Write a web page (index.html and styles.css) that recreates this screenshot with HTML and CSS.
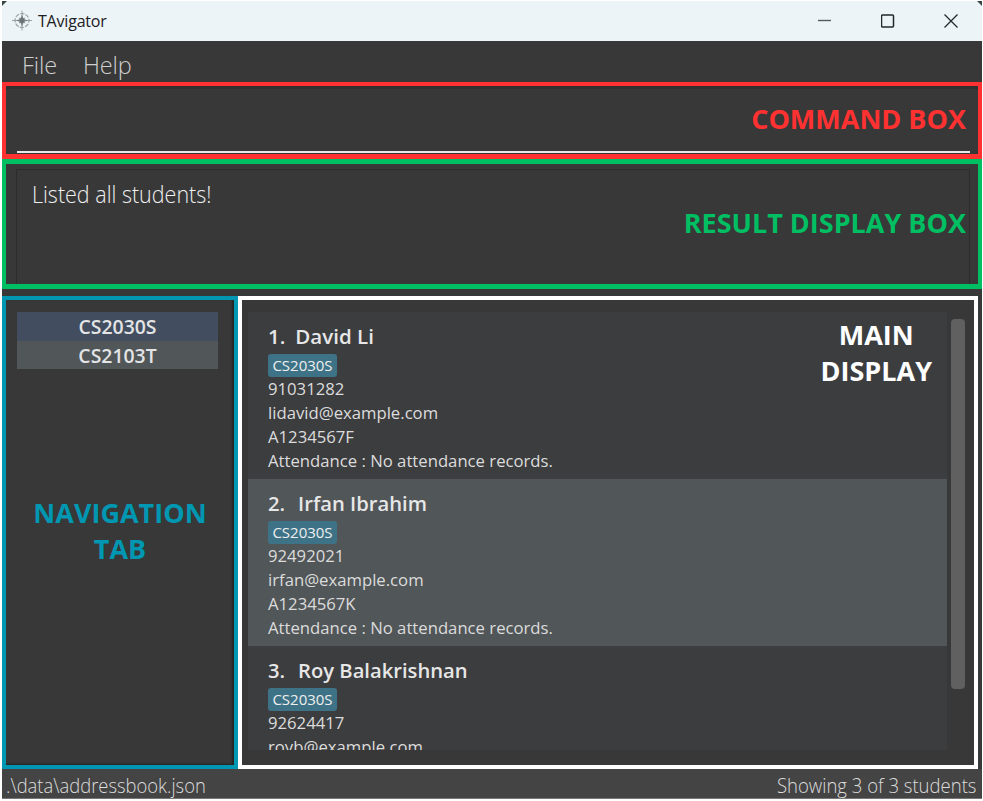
FILE: index.html
```html
<!DOCTYPE html>
<html lang="en">
<head>
<meta charset="utf-8">
<title>TAvigator</title>
<link rel="stylesheet" href="styles.css">
</head>
<body>
<div class="window">
  <header class="titlebar">
    <svg class="logo" width="20" height="22" viewBox="0 0 20 22" fill="none">
      <circle cx="10" cy="10.500" r="7" stroke="#9aa0a3" stroke-width="1.200" stroke-dasharray="4.200 1.300" stroke-dashoffset="2"/>
      <path d="M10 .500v20M0 10.500h20" stroke="#969c9f" stroke-width=".9"/>
      <path d="M10 4.500l1.500 4.500L16 10.500l-4.500 1.500L10 16.500l-1.500-4.500L4 10.500l4.500-1.500z" fill="#757b7f"/>
      <path d="M7.500 8l5 5M12.500 8l-5 5" stroke="#6a7073" stroke-width="1.200"/>
    </svg>
    <span class="app-name">TAvigator</span>
    <div class="controls">
      <svg width="14" height="14" viewBox="0 0 14 14"><path d="M0 6.500h13" stroke="#555a5d" stroke-width="1.400"/></svg>
      <svg width="14" height="14" viewBox="0 0 14 14"><rect x=".5" y="1" width="12" height="12" rx="1" fill="none" stroke="#23272a" stroke-width="1.500"/></svg>
      <svg width="14" height="14" viewBox="0 0 14 14"><path d="M.5.500l13 13M13.500.500l-13 13" stroke="#25292b" stroke-width="1.300"/></svg>
    </div>
  </header>
  <nav class="menu"><span>File</span><span>Help</span></nav>
  <section class="command"><div class="command-field"><span class="label">COMMAND BOX</span></div></section>
  <section class="result"><div class="result-field"><span class="message">Listed all students!</span><span class="label result-label">RESULT DISPLAY BOX</span></div></section>
  <main class="content">
    <aside class="nav">
      <div class="course selected">CS2030S</div>
      <div class="course">CS2103T</div>
      <div class="label nav-label">NAVIGATION<br>TAB</div>
    </aside>
    <section class="display">
      <div class="list">
        <article class="card">
          <h2 class="first"><span>1.</span><span>David Li</span></h2>
          <span class="tag">CS2030S</span>
          <p>91031282</p><p>lidavid@example.com</p><p>A1234567F</p><p>Attendance : No attendance records.</p>
        </article>
        <article class="card alt">
          <h2><span>2.</span><span>Irfan Ibrahim</span></h2>
          <span class="tag">CS2030S</span>
          <p>92492021</p><p>irfan@example.com</p><p>A1234567K</p><p>Attendance : No attendance records.</p>
        </article>
        <article class="card">
          <h2><span>3.</span><span>Roy Balakrishnan</span></h2>
          <span class="tag">CS2030S</span>
          <p>92624417</p><p>royb@example.com</p>
        </article>
      </div>
      <div class="scrollbar"></div>
      <div class="label main-label">MAIN<br>DISPLAY</div>
    </section>
  </main>
  <footer class="status"><span class="path">.\data\addressbook.json</span><span class="count">Showing 3 of 3 students</span></footer>
</div>
</body>
</html>
```
FILE: styles.css
```css
* { box-sizing: border-box; }
body { margin: 0; width: 983px; height: 801px; overflow: hidden; background: #fff; font-family: "Open Sans", sans-serif; }
.window { margin: 1px 0 0 2px; width: 980px; height: 798px; background: #383838; display: flex; flex-direction: column; border-bottom: 1px solid #777; }
.titlebar { height: 40px; background: linear-gradient(225deg, #3a4444 3px, transparent 4px), linear-gradient(135deg, #3a4444 3px, #ecf4f8 4px); display: flex; align-items: center; padding: 0 24px 0 10px; }
.app-name { margin-left: 6px; font-size: 16px; color: #1d2022; white-space: nowrap; letter-spacing: -.2px; }
.controls { margin-left: auto; display: flex; gap: 49px; }
.controls svg { display: block; }
.menu { height: 41px; padding: 4px 20px 0; font-size: 23.500px; line-height: 41px; font-weight: 300; color: #cfcfcf; display: flex; gap: 26px; letter-spacing: -.1px; }
.command { height: 77px; border: 4px solid #ff3131; border-bottom-width: 5px; padding: 2px 8px 0 11px; box-shadow: inset 0 3px 0 #303030; }
.command-field { height: 65px; border-bottom: 2px solid #e8e8e8; text-align: right; padding: 13px 4px 0 0; }
.label { font-weight: 700; font-size: 27px; line-height: 36px; color: #ff3131; white-space: nowrap; }
.command .label { display: block; }
.result { height: 130px; border: 4px solid #00bf63; border-width: 5px 4px; padding: 5px 8px 0 10px; }
.result-field { height: 115px; border: 1px solid #2c2c2c; border-bottom: 0; display: flex; justify-content: space-between; padding: 7px 3px 0 15px; }
.message { font-size: 24.500px; line-height: 34px; font-weight: 300; color: #efefef; white-space: nowrap; transform: scaleX(.877); transform-origin: left; }
.result .label { color: #00bf63; margin-top: 28px; }
.content { height: 473px; margin-top: 7px; display: flex; }
.nav { width: 236px; border: 4px solid #0097b2; padding: 12px 16px 0 11px; box-shadow: inset -2px -1px 2px #242424; text-align: center; }
.course { height: 28px; font-size: 19.400px; line-height: 29px; font-weight: 600; color: #e3e4e6; background: #515658; }
.course.selected { height: 29px; line-height: 30px; background: #424d5f; }
.nav-label { color: #0097b2; margin: 126px -3px 0 2px; }
.display { position: relative; width: 740px; border: 4px solid #fff; padding: 12px 9px 0 6px; display: flex; justify-content: space-between; }
.list { width: 699px; height: 438px; overflow: hidden; }
.card { height: 167px; background: #3c3d3f; padding: 8px 20px 0; color: #dcdcdc; }
.card.alt { background: #515658; }
h2 { margin: 0; display: flex; gap: 13px; font-size: 20.200px; line-height: 33px; font-weight: 600; color: #e7e7e7; }
h2.first { gap: 10px; font-size: 20.500px; }
.tag { display: block; width: 69px; height: 23px; margin: 1px 0 0; background: #3e7387; border-radius: 3px; font-size: 15px; line-height: 23px; text-align: center; color: #eee; }
p { margin: 0; font-size: 16.700px; line-height: 24px; white-space: nowrap; }
.scrollbar { width: 14px; height: 370px; margin-top: 7px; border-radius: 4px; background: #606060; }
.main-label { position: absolute; top: 17px; right: 42px; text-align: center; color: #fff; }
.status { height: 29px; background: #444; display: flex; justify-content: space-between; padding: 0 6px 0 4px; font-size: 20px; line-height: 33px; font-weight: 300; color: #ddd; white-space: nowrap; }
.path { transform: scaleX(.92); transform-origin: left; }
.count { transform: scaleX(.926); transform-origin: right; }
```
